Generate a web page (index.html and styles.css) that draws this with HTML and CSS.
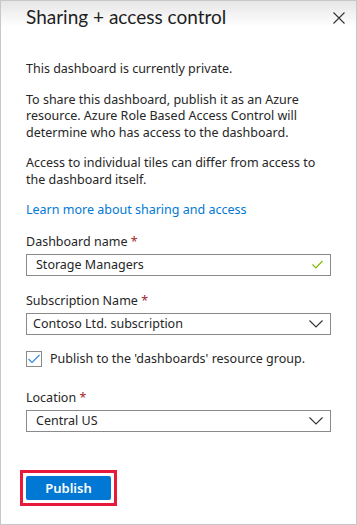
FILE: index.html
```html
<!DOCTYPE html>
<html lang="en">
<head>
    <meta charset="UTF-8">
    <meta name="viewport" content="width=device-width, initial-scale=1.0">
    <title>Sharing + access control</title>
    <link rel="stylesheet" href="styles.css">
</head>
<body>
    <div class="panel">
        <div class="header">
            <h1>Sharing + access control</h1>
            <button class="close" aria-label="Close">
                <svg width="12" height="12" viewBox="0 0 12 12"><path d="M0.5 0.5L11.5 11.5M11.5 0.5L0.5 11.5" stroke="#333" stroke-width="1.1" fill="none"/></svg>
            </button>
        </div>

        <div class="content">
            <p>This dashboard is currently private.</p>
            <p>To share this dashboard, publish it as an Azure resource. Azure Role Based Access Control will determine who has access to the dashboard.</p>
            <p>Access to individual tiles can differ from access to the dashboard itself.</p>
            <a href="#" class="learn">Learn more about sharing and access</a>

            <div class="field">
                <label>Dashboard name <span class="req">*</span></label>
                <div class="box">
                    <span class="value indent">Storage Managers</span>
                    <svg class="check" width="11" height="9" viewBox="0 0 11 9"><path d="M0.5 4.5L3.8 7.8L10.5 1" stroke="#7fba00" stroke-width="1.2" fill="none"/></svg>
                </div>
            </div>

            <div class="field">
                <label>Subscription Name <span class="req">*</span></label>
                <div class="box">
                    <span class="value">Contoso Ltd. subscription</span>
                    <svg class="chev" width="14" height="8" viewBox="0 0 14 8"><path d="M0.5 0.5L7 7L13.5 0.5" stroke="#333" stroke-width="1.1" fill="none"/></svg>
                </div>
            </div>

            <div class="checkrow">
                <span class="checkbox">
                    <svg width="12" height="10" viewBox="0 0 12 10"><path d="M0.5 5L4 8.5L11.5 1" stroke="#2b88d8" stroke-width="1.1" fill="none"/></svg>
                </span>
                <span>Publish to the 'dashboards' resource group.</span>
            </div>

            <div class="field">
                <label>Location <span class="req">*</span></label>
                <div class="box">
                    <span class="value indent">Central US</span>
                    <svg class="chev" width="14" height="8" viewBox="0 0 14 8"><path d="M0.5 0.5L7 7L13.5 0.5" stroke="#333" stroke-width="1.1" fill="none"/></svg>
                </div>
            </div>
        </div>

        <div class="footer">
            <div class="highlight">
                <button class="publish">Publish</button>
            </div>
        </div>
    </div>
</body>
</html>
```

FILE: styles.css
```css
* {
    box-sizing: border-box;
}
body {
    margin: 0;
    font-family: "Noto Sans", "Open Sans", sans-serif;
    font-size: 12.5px;
    color: #262626;
    background: #fff;
}
.panel {
    width: 357px;
    height: 525px;
    border: 1px solid #c8c8c8;
    display: flex;
    flex-direction: column;
}
.header {
    display: flex;
    justify-content: space-between;
    align-items: flex-start;
    padding: 2px 9px 0 25px;
    height: 60px;
    flex-shrink: 0;
    background: linear-gradient(to bottom, #e6e6e6 0, #ffffff 26px);
}
.header h1 {
    margin: 0;
    font-family: Lato, "Noto Sans", sans-serif;
    font-size: 19px;
    font-weight: 400;
    line-height: 28px;
    color: #1e1e1e;
}
.close {
    background: none;
    border: none;
    padding: 9px 2px;
    cursor: pointer;
}
.content {
    padding: 0 25px;
    flex: 1;
}
.content p {
    margin: 0 0 14px;
    line-height: 16.5px;
}
.learn {
    display: block;
    color: #0078d4;
    text-decoration: none;
    line-height: 16.5px;
    margin-bottom: 14px;
}
.field {
    margin-bottom: 16px;
}
.field label {
    display: block;
    margin-bottom: 3px;
    line-height: 18px;
}
.req {
    color: #a4262c;
}
.box {
    height: 22px;
    border: 1px solid #8a8a8a;
    display: flex;
    align-items: center;
    justify-content: space-between;
    padding: 0 7px 0 6px;
}
.value.indent {
    padding-left: 3px;
}
.checkrow {
    display: flex;
    align-items: center;
    gap: 8px;
    height: 16px;
    margin-bottom: 22px;
}
.checkbox {
    width: 16px;
    height: 16px;
    border: 1px solid #8a8a8a;
    display: flex;
    align-items: center;
    justify-content: center;
}
.footer {
    padding: 0 0 18px 19px;
}
.highlight {
    display: inline-block;
    border: 3px solid #e81a3b;
    padding: 3px;
}
.publish {
    display: block;
    width: 85px;
    height: 24px;
    background: #0078d4;
    color: #fff;
    border: none;
    border-radius: 2px;
    font-family: "Noto Sans", sans-serif;
    font-size: 13px;
    font-weight: 600;
    cursor: pointer;
}
```
